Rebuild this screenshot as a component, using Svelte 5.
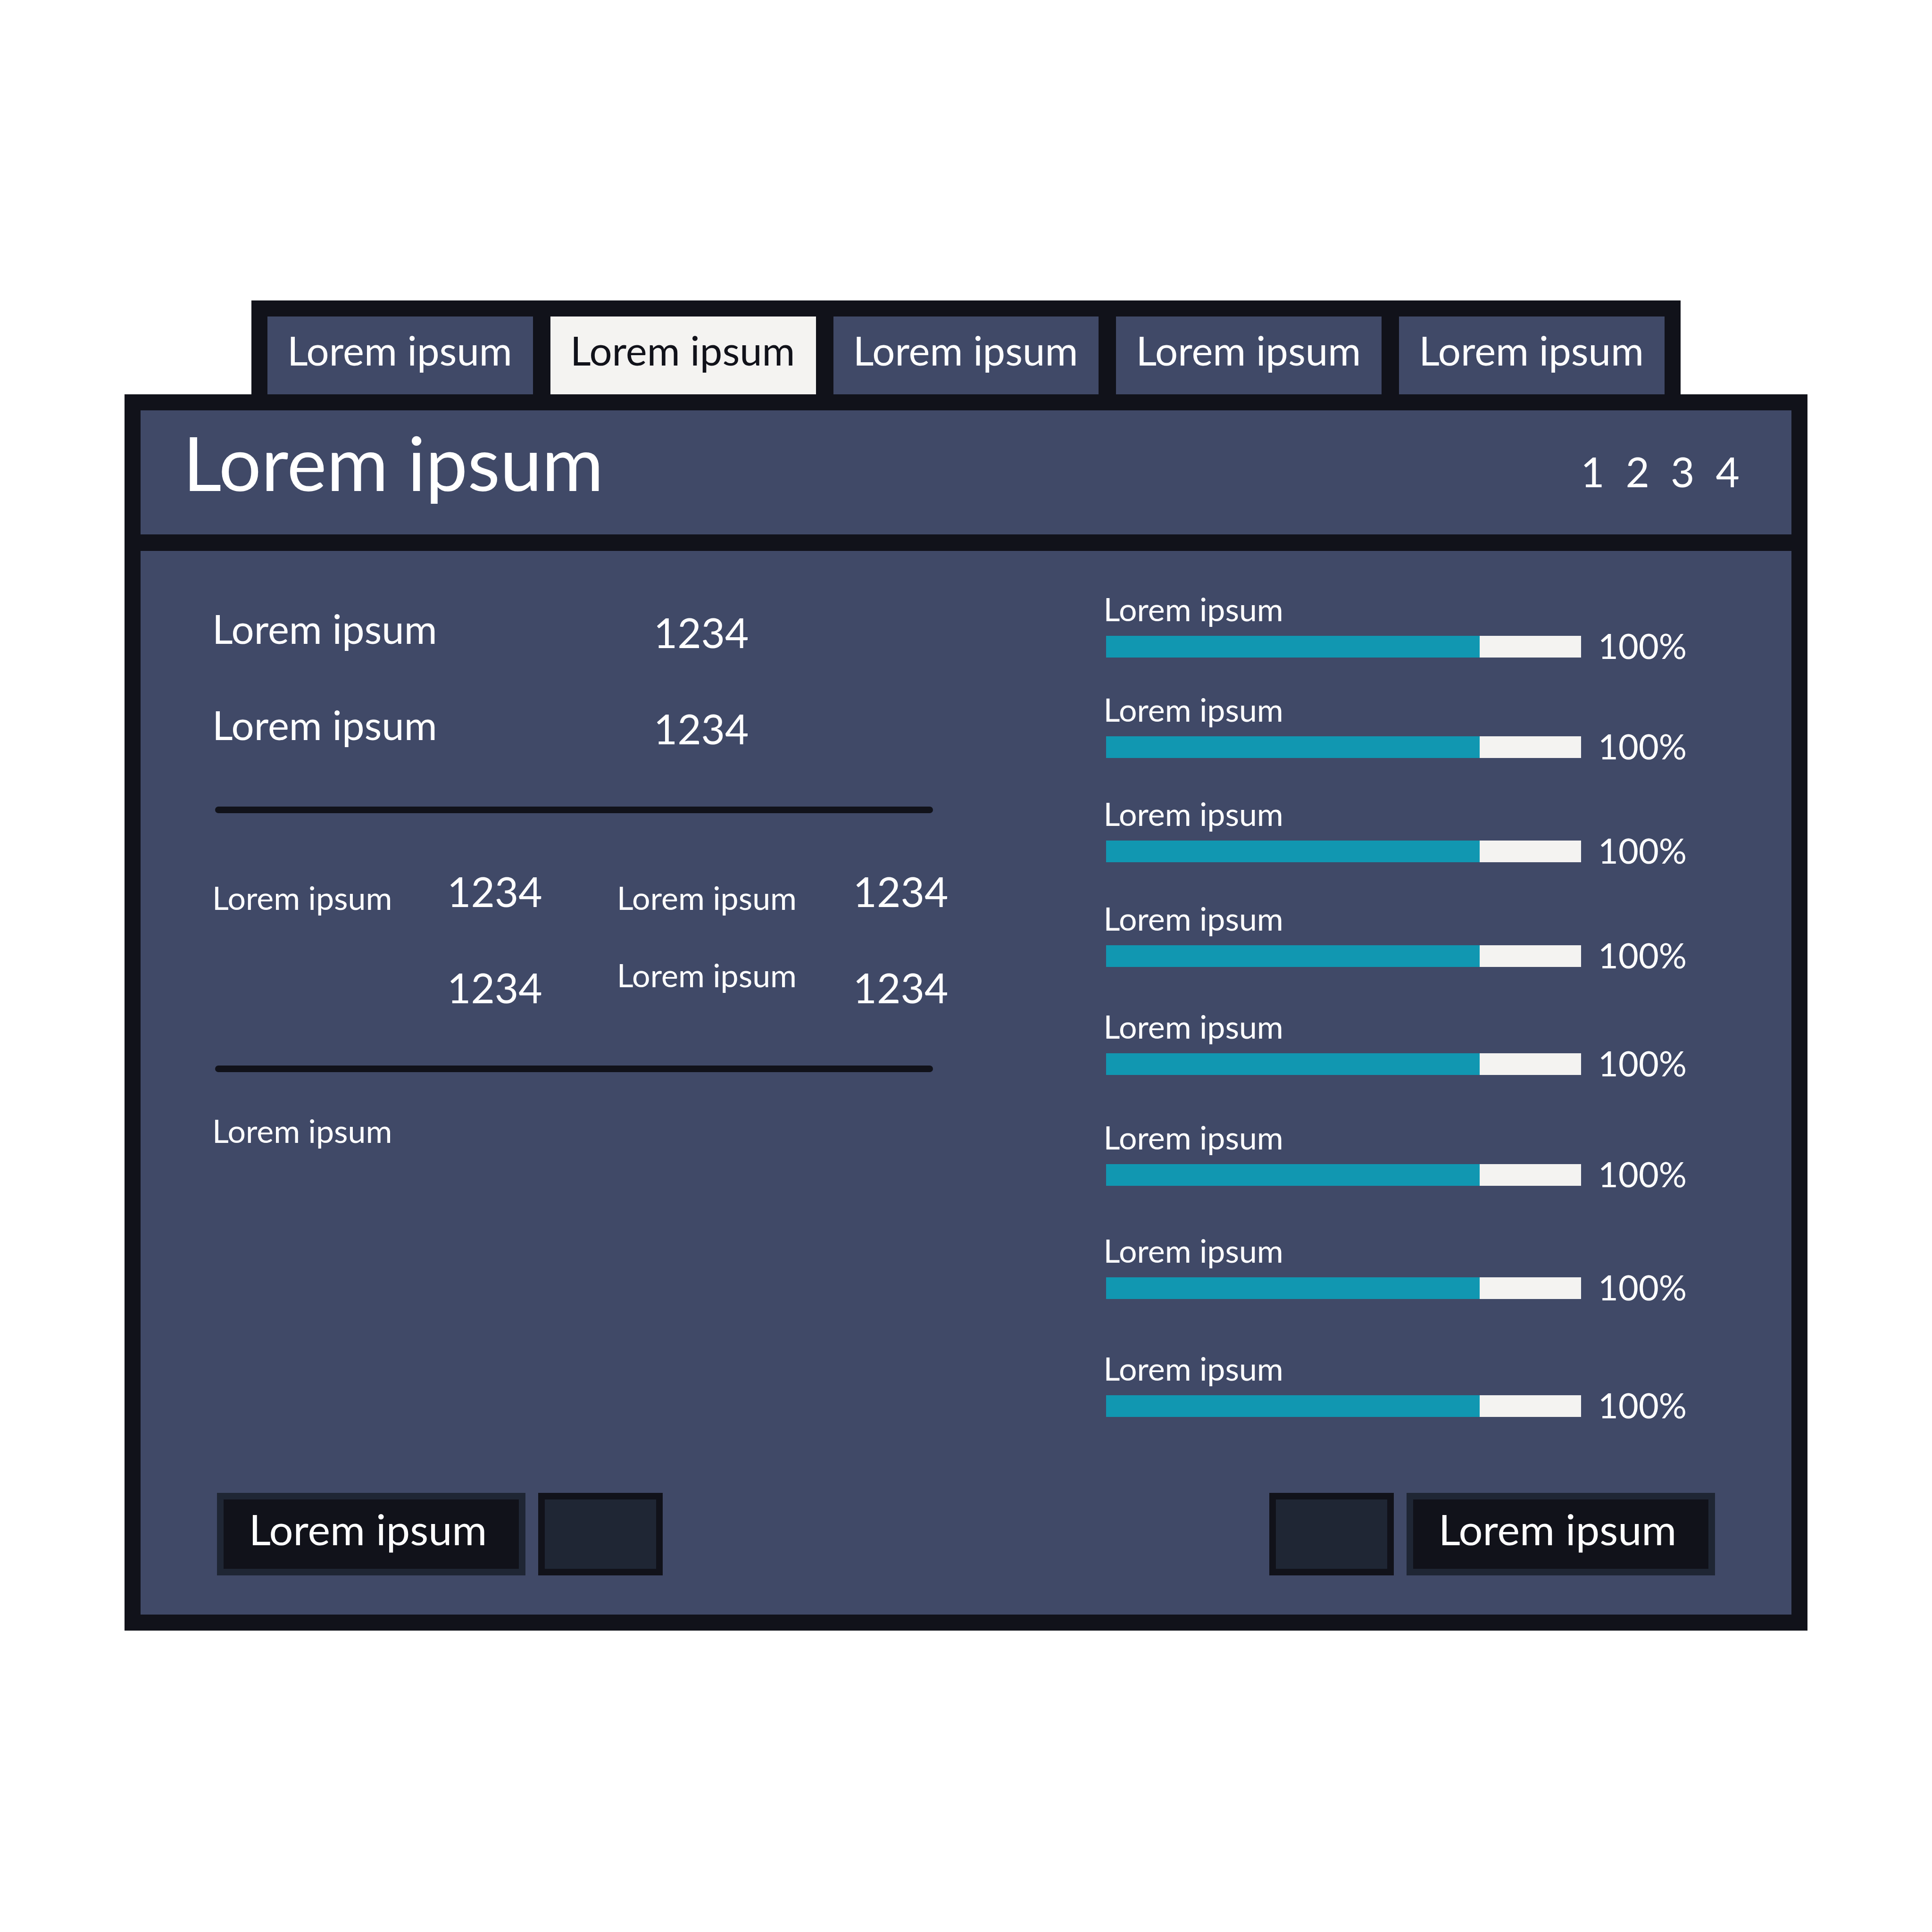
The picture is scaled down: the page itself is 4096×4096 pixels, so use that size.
<script>
  const tabs = ['Lorem ipsum', 'Lorem ipsum', 'Lorem ipsum', 'Lorem ipsum', 'Lorem ipsum'];
  const pages = [1, 2, 3, 4];
  const meters = Array.from({ length: 8 }, (_, i) => ({ id: `meter-${i}`, label: 'Lorem ipsum', value: 786, text: '100%' }));
  let active = $state(1);
</script>

<main>
  <div class="tabs" role="tablist">
    {#each tabs as tab, i}
      <button class="tab" class:active={active === i} role="tab" aria-selected={active === i} onclick={() => (active = i)}>{tab}</button>
    {/each}
  </div>

  <section class="panel">
    <header>
      <h1>Lorem ipsum</h1>
      <nav aria-label="Pages">
        {#each pages as page}
          <a href={`#page-${page}`}>{page}</a>
        {/each}
      </nav>
    </header>

    <div class="body">
      <div class="columns">
        <div class="details">
          <dl class="totals">
            <dt>Lorem ipsum</dt><dd>1234</dd>
            <dt>Lorem ipsum</dt><dd>1234</dd>
          </dl>
          <hr />
          <div class="stats">
            <span class="name upper">Lorem ipsum</span><span class="number">1234</span>
            <span class="name upper">Lorem ipsum</span><span class="number">1234</span>
            <span></span><span class="number">1234</span>
            <span class="name lower">Lorem ipsum</span><span class="number">1234</span>
          </div>
          <hr />
          <p>Lorem ipsum</p>
        </div>

        <div class="meters">
          {#each meters as meter}
            <div class="meter">
              <label for={meter.id}>{meter.label}</label>
              <div class="track">
                <progress id={meter.id} max="1000" value={meter.value}></progress>
                <span>{meter.text}</span>
              </div>
            </div>
          {/each}
        </div>
      </div>

      <footer>
        <div class="actions">
          <button class="action">Lorem ipsum</button>
          <button class="slot" aria-label="Left slot"></button>
        </div>
        <div class="actions">
          <button class="slot" aria-label="Right slot"></button>
          <button class="action">Lorem ipsum</button>
        </div>
      </footer>
    </div>
  </section>
</main>

<style>
  :global(body) {
    background: #ffffff;
  }
  main {
    --ink: #11121a;
    --blue: #404967;
    --pale: #f4f3f1;
    --slate: #1f2634;
    padding: 637px 264px 0;
    font-family: Lato, 'Open Sans', sans-serif;
    color: #ffffff;
  }
  * {
    box-sizing: border-box;
  }
  button {
    margin: 0;
    font-family: inherit;
    color: inherit;
    border: 0;
    border-radius: 0;
  }
  .tabs {
    display: grid;
    grid-template-columns: repeat(5, 1fr);
    gap: 37px;
    margin: 0 269px;
    padding: 34px 34px 0;
    background: var(--ink);
  }
  .tab {
    height: 165px;
    padding: 0 2px 24px 0;
    font-size: 85px;
    line-height: 100px;
    background: var(--blue);
  }
  .tab.active {
    background: var(--pale);
    color: var(--ink);
  }
  .panel {
    border: 34px solid var(--ink);
    background: var(--blue);
  }
  header {
    display: flex;
    justify-content: space-between;
    align-items: center;
    height: 298px;
    padding: 0 110px 0 90px;
    border-bottom: 35px solid var(--ink);
  }
  h1 {
    margin: 0;
    padding-bottom: 43px;
    font-size: 159px;
    font-weight: 400;
    line-height: 188px;
  }
  nav {
    display: flex;
    gap: 45px;
    padding-bottom: 3px;
    font-size: 87px;
    line-height: 108px;
  }
  nav a {
    color: inherit;
    text-decoration: none;
  }
  .body {
    padding: 66px 162px 83px 152px;
  }
  .columns {
    display: grid;
    grid-template-columns: 1561fr 1297fr;
    column-gap: 329px;
  }
  .totals {
    display: grid;
    grid-template-columns: 936fr 625fr;
    grid-auto-rows: 204px;
    align-items: center;
    margin: 0;
  }
  dt {
    padding-bottom: 9px;
    font-size: 85px;
    line-height: 100px;
  }
  dd {
    margin: 0;
    padding-top: 10px;
    font-size: 87px;
    line-height: 108px;
  }
  hr {
    height: 14px;
    margin: 68px 32px 63px 6px;
    border: 0;
    border-radius: 7px;
    background: var(--ink);
  }
  .stats {
    display: grid;
    grid-template-columns: 501fr 362fr 504fr 194fr;
    grid-auto-rows: 204px;
    align-items: center;
  }
  .stats + hr {
    margin-top: 64px;
    margin-bottom: 84px;
  }
  .name,
  p,
  label {
    font-size: 68px;
    line-height: 80px;
    white-space: nowrap;
  }
  .upper {
    padding-top: 28px;
  }
  .lower {
    padding-bottom: 52px;
  }
  .number {
    padding-top: 2px;
    font-size: 87px;
    line-height: 108px;
  }
  p {
    margin: 0;
  }
  .meters {
    display: grid;
    grid-template-rows: 213px 221px 222px 229px 235px 240px 250px 180px;
    padding-top: 17px;
  }
  label {
    display: block;
  }
  .track {
    display: flex;
    align-items: center;
    gap: 36px;
    height: 46px;
    margin: 17px 0 0 6px;
    font-size: 74px;
    line-height: 46px;
  }
  progress {
    appearance: none;
    flex: 1007 1 0;
    min-width: 0;
    height: 46px;
    border: 0;
    background: var(--pale);
  }
  progress::-webkit-progress-bar {
    background: var(--pale);
  }
  progress::-webkit-progress-value {
    background: #1197b1;
  }
  .track span {
    flex: 248 1 0;
    padding-bottom: 4px;
  }
  footer {
    display: flex;
    justify-content: space-between;
    padding-left: 10px;
    margin-top: 124px;
  }
  .actions {
    display: flex;
    gap: 27px;
  }
  .action,
  .slot {
    height: 175px;
    border: 14px solid var(--slate);
    background: var(--ink);
  }
  .action {
    width: 654px;
    padding: 0 14px 24px 0;
    font-size: 90px;
    line-height: 106px;
  }
  .slot {
    width: 264px;
    border-color: var(--ink);
    background: var(--slate);
  }
</style>
